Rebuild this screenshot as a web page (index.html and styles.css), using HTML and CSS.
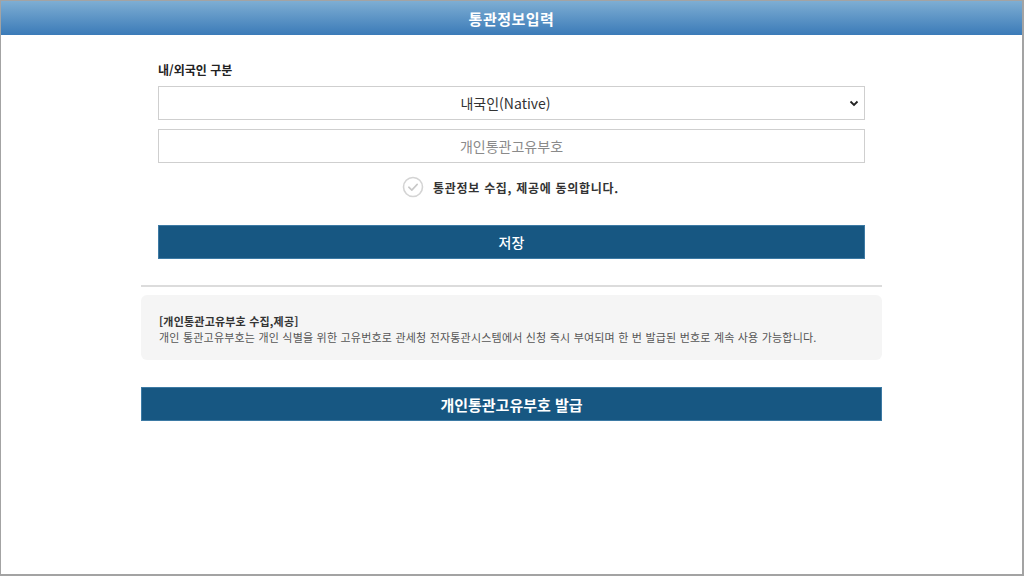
FILE: index.html
```html
<!DOCTYPE html>
<html lang="ko">
<head>
  <meta charset="UTF-8">
  <title>통관정보입력</title>
  <link rel="stylesheet" href="styles.css">
</head>
<body>
  <div class="frame">
    <div class="banner">
      <h1>통관정보입력</h1>
    </div>

    <div class="container">
      <form class="customs-form">
        <label class="field-label" for="nationality">내/외국인 구분</label>
        <select id="nationality" class="field">
          <option value="native">내국인(Native)</option>
          <option value="foreigner">외국인(Foreigner)</option>
        </select>
        <input type="text" class="field" placeholder="개인통관고유부호">

        <div class="agree">
          <svg class="check" width="22" height="22" viewBox="0 0 22 22">
            <circle cx="11" cy="11" r="9.5" fill="#fff" stroke="#d4d4d4" stroke-width="1.6"/>
            <path d="M6.8 11.2 L9.8 14.1 L15.2 8.4" fill="none" stroke="#c8c8c8" stroke-width="1.6" stroke-linecap="round" stroke-linejoin="round"/>
          </svg>
          <span>통관정보 수집, 제공에 동의합니다.</span>
        </div>

        <button type="submit" class="btn">저장</button>
      </form>

      <hr class="divider">

      <div class="notice">
        <strong>[개인통관고유부호 수집,제공]</strong>
        <p>개인 통관고유부호는 개인 식별을 위한 고유번호로 관세청 전자통관시스템에서 신청 즉시 부여되며 한 번 발급된 번호로 계속 사용 가능합니다.</p>
      </div>

      <button type="button" class="btn btn-issue">개인통관고유부호 발급</button>
    </div>
  </div>
</body>
</html>
```

FILE: styles.css
```css
html, body {
  margin: 0;
  padding: 0;
}

body {
  font-family: 'Noto Sans CJK KR', 'Noto Sans', sans-serif;
  color: #222;
  background: #fff;
}

.frame {
  height: 576px;
  box-sizing: border-box;
  border: 1px solid #a3a3a3;
  border-right-width: 2px;
  border-bottom-width: 2px;
}

.banner {
  height: 34px;
  background: linear-gradient(to bottom, #7eaed3, #3b7bb8);
  display: flex;
  align-items: center;
  justify-content: center;
}

h1 {
  margin: 0;
  font-size: 15px;
  font-weight: 700;
  color: #fff;
  letter-spacing: 0.5px;
}

.container {
  width: 741px;
  margin-left: 140px;
  padding-top: 26px;
}

.customs-form {
  padding: 0 17px;
  display: flex;
  flex-direction: column;
}

.field-label {
  font-size: 12px;
  font-weight: 700;
  color: #222;
  line-height: 18px;
  margin-bottom: 7px;
}

.field {
  width: 100%;
  height: 34px;
  box-sizing: border-box;
  border: 1px solid #cfcfcf;
  background: #fff;
  font-family: inherit;
  font-size: 14px;
  color: #333;
  text-align: center;
  text-align-last: center;
  margin-bottom: 9px;
  outline: none;
}

select.field {
  appearance: none;
  -webkit-appearance: none;
  background-image: url("data:image/svg+xml,%3Csvg xmlns='http://www.w3.org/2000/svg' width='10' height='7' viewBox='0 0 10 7'%3E%3Cpath d='M1.5 1.5 L5 5 L8.5 1.5' fill='none' stroke='%23222' stroke-width='1.8'/%3E%3C/svg%3E");
  background-repeat: no-repeat;
  background-position: right 5px center;
  padding: 0 32px 0 20px;
}

.field::placeholder {
  color: #8a8a8a;
}

.agree {
  display: flex;
  align-items: center;
  justify-content: center;
  gap: 9px;
  margin-top: 4px;
  margin-left: -2px;
  font-size: 12px;
  letter-spacing: 0.7px;
  font-weight: 700;
  color: #333;
}

.btn {
  height: 34px;
  width: 100%;
  border: 1px solid #3d7aa4;
  background: #175782;
  color: #fff;
  font-family: inherit;
  font-size: 14px;
  font-weight: 500;
  cursor: pointer;
}

.customs-form .btn {
  margin-top: 27px;
}

.divider {
  border: none;
  height: 2px;
  background: #dcdcdc;
  margin: 26px 0 8px;
}

.notice {
  background: #f5f5f5;
  border-radius: 6px;
  padding: 18px 18px 15px;
  font-size: 11px;
  letter-spacing: 0.2px;
  line-height: 16px;
  color: #555;
}

.notice strong {
  color: #333;
  font-weight: 700;
}

.notice p {
  margin: 0;
}

.btn-issue {
  margin-top: 27px;
  font-size: 15px;
  font-weight: 700;
}
```
